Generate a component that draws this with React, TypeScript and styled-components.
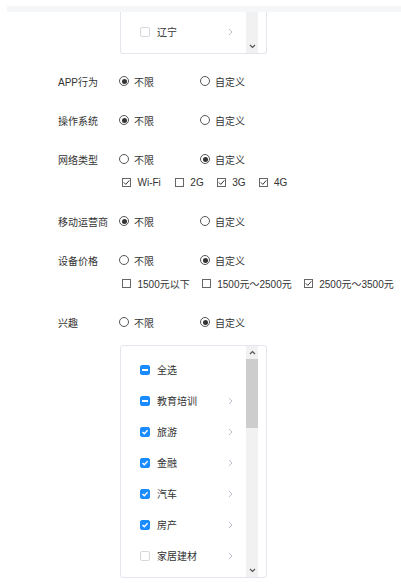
import React from "react";
import styled, { createGlobalStyle } from "styled-components";

const Global = createGlobalStyle`
  html, body { margin: 0; padding: 0; background: #fff; }
  body {
    font-family: "Liberation Sans", Arial, "Noto Sans CJK SC", sans-serif;
    font-size: 10px;
    color: #333;
  }
`;

const Page = styled.div`
  width: 401px;
  height: 586px;
  overflow: hidden;
`;

const TopStrip = styled.div`
  margin: 6px 0 0 7px;
  height: 6px;
  background: #f5f6f8;
`;

const Panel = styled.div<{ $h: number; $open?: boolean }>`
  box-sizing: border-box;
  width: 147px;
  height: ${(p) => p.$h}px;
  border: 1px solid #e4e6ed;
  ${(p) => (p.$open ? "border-top: none; border-radius: 0 0 3px 3px;" : "border-radius: 3px;")}
  display: flex;
  padding-right: 8px;
  background: #fff;
`;

const TopPanel = styled(Panel)`
  margin-left: 120px;
`;

const List = styled.div<{ $pt: number }>`
  flex: 1;
  padding-top: ${(p) => p.$pt}px;
`;

const Item = styled.div`
  height: 31px;
  display: flex;
  align-items: center;
  padding: 0 13px 0 19px;
`;

const ItemText = styled.span`
  flex: 1;
  margin-left: 7px;
  font-size: 10px;
  color: #333;
`;

const Track = styled.div`
  width: 12px;
  background: #f1f1f1;
  display: flex;
  flex-direction: column;
`;

const ArrowBtn = styled.div`
  height: 13px;
  display: flex;
  align-items: center;
  justify-content: center;
`;

const Thumb = styled.div`
  height: 69px;
  background: #cdcdcd;
`;

const Spacer = styled.div`
  flex: 1;
`;

const Form = styled.div`
  margin-top: 19px;
  padding-left: 58px;
`;

const Field = styled.div`
  display: grid;
  grid-template-columns: 61px 1fr;
  row-gap: 7px;
  margin-bottom: 23px;
`;

const Label = styled.div`
  height: 16px;
  display: flex;
  align-items: center;
  color: #333;
  white-space: nowrap;
`;

const RadioGroup = styled.div`
  display: flex;
  height: 16px;
  align-items: center;
`;

const RadioOption = styled.label`
  width: 81px;
  display: flex;
  align-items: center;
  gap: 5px;
  color: #333;
`;

const RadioCircle = styled.span<{ $on?: boolean }>`
  box-sizing: border-box;
  width: 10px;
  height: 10px;
  border-radius: 50%;
  border: 1px solid #555;
  display: flex;
  align-items: center;
  justify-content: center;
  &::after {
    content: "";
    width: 5px;
    height: 5px;
    border-radius: 50%;
    background: ${(p) => (p.$on ? "#333" : "transparent")};
  }
`;

const SubRow = styled.div`
  grid-column: 2;
  display: flex;
  align-items: center;
  height: 16px;
  padding-left: 3px;
  white-space: nowrap;
`;

const CheckOption = styled.label<{ $gap: number }>`
  display: flex;
  align-items: center;
  gap: 6.5px;
  margin-right: ${(p) => p.$gap}px;
  color: #333;
`;

const PlainBox = styled.span`
  box-sizing: border-box;
  width: 9px;
  height: 9px;
  border: 1px solid #666;
  display: flex;
  align-items: center;
  justify-content: center;
`;

const BlueBox = styled.span<{ $state: "on" | "off" | "mixed" }>`
  box-sizing: border-box;
  width: 10px;
  height: 10px;
  border-radius: 2px;
  flex: none;
  border: 1px solid ${(p) => (p.$state === "off" ? "#d6d8de" : "#1a8cff")};
  background: ${(p) => (p.$state === "off" ? "#fff" : "#1a8cff")};
  display: flex;
  align-items: center;
  justify-content: center;
`;

const Dash = styled.span`
  width: 6px;
  height: 2px;
  background: #fff;
`;

const InterestPanel = styled(Panel)`
  grid-column: 2;
  margin-top: 8px;
  margin-left: 1px;
`;

const Chevron = () => (
  <svg width="5" height="8" viewBox="0 0 5 8">
    <path d="M1 1 L4 4 L1 7" fill="none" stroke="#b9c0cc" strokeWidth="1" />
  </svg>
);

const Up = () => (
  <svg width="7" height="5" viewBox="0 0 7 5">
    <path d="M1 4 L3.5 1.5 L6 4" fill="none" stroke="#555" strokeWidth="1.2" />
  </svg>
);

const Down = () => (
  <svg width="7" height="5" viewBox="0 0 7 5">
    <path d="M1 1 L3.5 3.5 L6 1" fill="none" stroke="#555" strokeWidth="1.2" />
  </svg>
);

const PlainCheck = ({ on }: { on?: boolean }) => (
  <PlainBox>
    {on && (
      <svg width="7" height="7" viewBox="0 0 7 7">
        <path d="M0.8 3.4 L2.8 5.4 L6.3 1.4" fill="none" stroke="#333" strokeWidth="1" />
      </svg>
    )}
  </PlainBox>
);

const BlueCheck = ({ state }: { state: "on" | "off" | "mixed" }) => (
  <BlueBox $state={state}>
    {state === "mixed" && <Dash />}
    {state === "on" && (
      <svg width="8" height="8" viewBox="0 0 8 8">
        <path d="M1.5 4 L3.3 5.8 L6.6 2.2" fill="none" stroke="#fff" strokeWidth="1.4" />
      </svg>
    )}
  </BlueBox>
);

const Radios = ({ custom }: { custom?: boolean }) => (
  <RadioGroup>
    <RadioOption>
      <RadioCircle $on={!custom} />
      不限
    </RadioOption>
    <RadioOption>
      <RadioCircle $on={custom} />
      自定义
    </RadioOption>
  </RadioGroup>
);

const interests: { name: string; state: "on" | "off" | "mixed"; arrow: boolean }[] = [
  { name: "全选", state: "mixed", arrow: false },
  { name: "教育培训", state: "mixed", arrow: true },
  { name: "旅游", state: "on", arrow: true },
  { name: "金融", state: "on", arrow: true },
  { name: "汽车", state: "on", arrow: true },
  { name: "房产", state: "on", arrow: true },
  { name: "家居建材", state: "off", arrow: true },
];

export default function App() {
  return (
    <Page>
      <Global />
      <TopStrip />
      <TopPanel $h={42} $open>
        <List $pt={4}>
          <Item>
            <BlueCheck state="off" />
            <ItemText>辽宁</ItemText>
            <Chevron />
          </Item>
        </List>
        <Track>
          <Spacer />
          <ArrowBtn>
            <Down />
          </ArrowBtn>
        </Track>
      </TopPanel>

      <Form>
        <Field>
          <Label>APP行为</Label>
          <Radios />
        </Field>
        <Field>
          <Label>操作系统</Label>
          <Radios />
        </Field>
        <Field>
          <Label>网络类型</Label>
          <Radios custom />
          <SubRow>
            <CheckOption $gap={14}>
              <PlainCheck on />
              Wi-Fi
            </CheckOption>
            <CheckOption $gap={13}>
              <PlainCheck />
              2G
            </CheckOption>
            <CheckOption $gap={13}>
              <PlainCheck on />
              3G
            </CheckOption>
            <CheckOption $gap={13}>
              <PlainCheck on />
              4G
            </CheckOption>
          </SubRow>
        </Field>
        <Field>
          <Label>移动运营商</Label>
          <Radios />
        </Field>
        <Field>
          <Label>设备价格</Label>
          <Radios custom />
          <SubRow>
            <CheckOption $gap={12}>
              <PlainCheck />
              1500元以下
            </CheckOption>
            <CheckOption $gap={12}>
              <PlainCheck />
              1500元～2500元
            </CheckOption>
            <CheckOption $gap={0}>
              <PlainCheck on />
              2500元～3500元
            </CheckOption>
          </SubRow>
        </Field>
        <Field>
          <Label>兴趣</Label>
          <Radios custom />
          <InterestPanel $h={233}>
            <List $pt={8}>
              {interests.map((it) => (
                <Item key={it.name}>
                  <BlueCheck state={it.state} />
                  <ItemText>{it.name}</ItemText>
                  {it.arrow && <Chevron />}
                </Item>
              ))}
            </List>
            <Track>
              <ArrowBtn>
                <Up />
              </ArrowBtn>
              <Thumb />
              <Spacer />
              <ArrowBtn>
                <Down />
              </ArrowBtn>
            </Track>
          </InterestPanel>
        </Field>
      </Form>
    </Page>
  );
}
